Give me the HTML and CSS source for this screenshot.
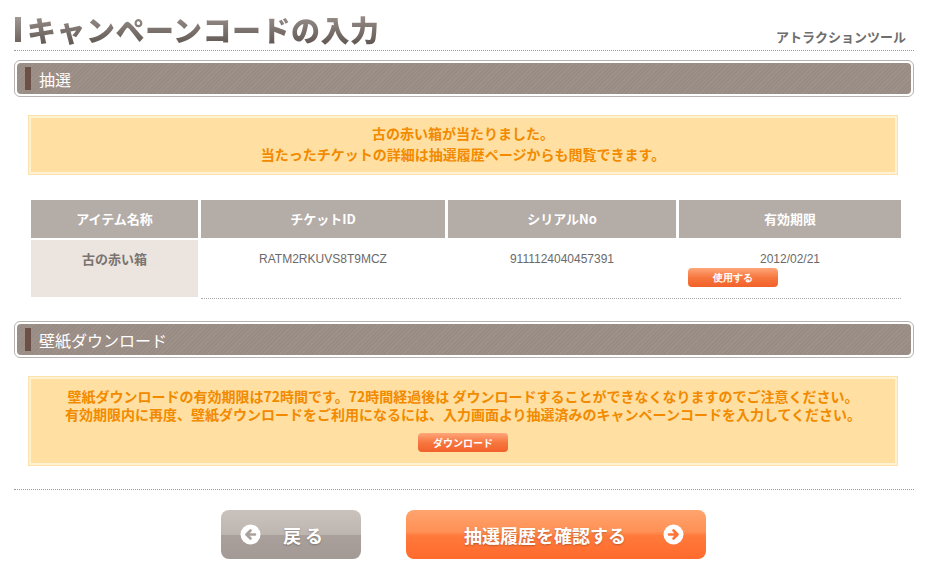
FILE: index.html
```html
<!DOCTYPE html>
<html lang="ja">
<head>
    <meta charset="UTF-8">
    <meta name="viewport" content="width=device-width, initial-scale=1.0">
    <title>キャンペーンコードの入力</title>
    <link rel="stylesheet" href="styles.css">
</head>
<body>
    <div class="page">
        <div class="page-head">
            <h1 class="page-title"><span class="title-mark"></span><span class="title-text">キャンペーンコードの入力</span></h1>
            <p class="tool-name">アトラクションツール</p>
        </div>

        <div class="section-bar">
            <div class="section-inner"><span class="section-mark"></span>抽選</div>
        </div>

        <div class="notice notice-result">
            <p>古の赤い箱が当たりました。</p>
            <p>当たったチケットの詳細は抽選履歴ページからも閲覧できます。</p>
        </div>

        <div class="ticket-table">
            <div class="th">アイテム名称</div>
            <div class="th">チケットID</div>
            <div class="th">シリアルNo</div>
            <div class="th">有効期限</div>
            <div class="td td-name">古の赤い箱</div>
            <div class="td">RATM2RKUVS8T9MCZ</div>
            <div class="td">9111124040457391</div>
            <div class="td td-date">
                2012/02/21
                <a href="#" class="small-btn use-btn">使用する</a>
            </div>
            <div class="row-line"></div>
        </div>

        <div class="section-bar section-wall">
            <div class="section-inner"><span class="section-mark"></span>壁紙ダウンロード</div>
        </div>

        <div class="notice notice-wall">
            <p>壁紙ダウンロードの有効期限は72時間です。72時間経過後は ダウンロードすることができなくなりますのでご注意ください。</p>
            <p>有効期限内に再度、壁紙ダウンロードをご利用になるには、入力画面より抽選済みのキャンペーンコードを入力してください。</p>
            <a href="#" class="small-btn dl-btn">ダウンロード</a>
        </div>

        <div class="foot-buttons">
            <a href="#" class="big-btn back-btn">
                <svg class="btn-icon" width="21" height="21" viewBox="0 0 21 21">
                    <circle cx="10.5" cy="10.5" r="10" fill="#fff"/>
                    <path d="M15 10.5H7M10.5 6.5L6.5 10.5L10.5 14.5" fill="none" stroke="#aaa19c" stroke-width="2.6" stroke-linecap="round" stroke-linejoin="round"/>
                </svg>
                <span class="btn-label">戻 る</span>
            </a>
            <a href="#" class="big-btn history-btn">
                <span class="btn-label">抽選履歴を確認する</span>
                <svg class="btn-icon" width="21" height="21" viewBox="0 0 21 21">
                    <circle cx="10.5" cy="10.5" r="10" fill="#fff"/>
                    <path d="M6 10.5H14M10.5 6.5L14.5 10.5L10.5 14.5" fill="none" stroke="#ff7436" stroke-width="2.6" stroke-linecap="round" stroke-linejoin="round"/>
                </svg>
            </a>
        </div>
    </div>
</body>
</html>
```

FILE: styles.css
```css
/* Reset */
* {
    margin: 0;
    padding: 0;
    box-sizing: border-box;
}

body {
    background-color: #fff;
    font-family: "Noto Sans CJK JP", "Liberation Sans", sans-serif;
    color: #666;
}

a {
    text-decoration: none;
}

.page {
    width: 900px;
    margin: 0 14px;
    padding-top: 12px;
}

/* Page heading */
.page-head {
    display: flex;
    justify-content: space-between;
    align-items: flex-end;
    padding: 0 0 4px 1px;
    border-bottom: 1px dotted #9a9a9a;
}

.page-title {
    display: flex;
    align-items: center;
    font-size: 29px;
    line-height: 34px;
    font-weight: 900;
}

.title-mark {
    display: inline-block;
    width: 6px;
    height: 25px;
    margin-right: 6px;
    background: linear-gradient(#a09893, #6f6560);
}

.title-text {
    background: linear-gradient(#9e9590, #5f5550);
    -webkit-background-clip: text;
    background-clip: text;
    color: transparent;
    letter-spacing: 0.5px;
}

.tool-name {
    font-size: 13px;
    line-height: 18px;
    font-weight: bold;
    color: #6e6e6e;
    margin-right: 8px;
}

/* Section bar */
.section-bar {
    margin-top: 9px;
    padding: 2px;
    border: 1px solid #b8b3b0;
    border-radius: 6px;
    background-color: #fff;
}

.section-inner {
    display: flex;
    align-items: center;
    height: 31px;
    border-radius: 4px;
    background: repeating-linear-gradient(135deg, #9f928a 0 1px, #998c84 1px 3px);
    color: #fff;
    font-size: 16px;
}

.section-mark {
    display: inline-block;
    width: 6px;
    height: 23px;
    margin: 0 8px 0 8px;
    background-color: #6a5047;
}

.section-wall {
    margin-top: 22px;
}

/* Yellow notice boxes */
.notice {
    margin: 18px 16px 0 14px;
    border: 1px solid #fbe2aa;
    box-shadow: inset 0 0 0 2px #fff2d2;
    background-color: #ffe0a2;
    text-align: center;
    color: #f28a00;
    font-size: 14px;
    font-weight: bold;
}

.notice-result {
    padding: 7px 0 9px;
    line-height: 21px;
}

.notice-wall {
    padding: 10px 0 13px;
    line-height: 18px;
}

/* Small orange buttons */
.small-btn {
    display: block;
    width: 90px;
    height: 19px;
    border-radius: 4px;
    background: linear-gradient(#ffa67a, #f6773f 50%, #f2612a);
    color: #fff;
    font-size: 10px;
    font-weight: bold;
    line-height: 19px;
    text-align: center;
}

.dl-btn {
    margin: 10px auto 0;
}

.use-btn {
    margin: 1px 0 0 9px;
}

/* Ticket table */
.ticket-table {
    display: grid;
    grid-template-columns: 167px 244px 228px 222px;
    column-gap: 3px;
    row-gap: 2px;
    margin: 25px 13px 0 17px;
}

.th {
    height: 38px;
    background-color: #b3aca7;
    color: #fff;
    font-size: 13px;
    font-weight: bold;
    line-height: 38px;
    text-align: center;
}

.td {
    height: 57px;
    padding-top: 12px;
    font-family: "Liberation Sans", sans-serif;
    font-size: 12px;
    line-height: 15px;
    text-align: center;
    color: #6a6a6a;
}

.td-name {
    padding-top: 10px;
    background-color: #ebe4df;
    font-family: "Noto Sans CJK JP", sans-serif;
    font-size: 13px;
    font-weight: bold;
    line-height: 18px;
    color: #7a7370;
}

.row-line {
    grid-column: 2 / 5;
    margin-top: -1px;
    border-top: 1px dotted #a9a9a9;
}

/* Footer buttons */
.foot-buttons {
    display: flex;
    justify-content: center;
    gap: 45px;
    margin-top: 23px;
    padding-top: 20px;
    padding-right: 1px;
    border-top: 1px dotted #9a9a9a;
}

.big-btn {
    display: flex;
    align-items: center;
    height: 49px;
    border-radius: 8px;
    color: #fff;
    font-size: 18px;
    font-weight: bold;
    text-shadow: 0 1px 2px rgba(0, 0, 0, 0.25);
}

.back-btn {
    width: 140px;
    padding-left: 19px;
    gap: 22px;
    background: linear-gradient(#c9c2bd, #bdb5b0 50%, #a9a09b 52%, #a39a95);
}

.history-btn {
    width: 300px;
    padding-left: 58px;
    gap: 37px;
    background: linear-gradient(#ffa46e, #ff9055 45%, #ff7a3c 52%, #ff6a2c);
}

.btn-icon {
    flex-shrink: 0;
}
```
